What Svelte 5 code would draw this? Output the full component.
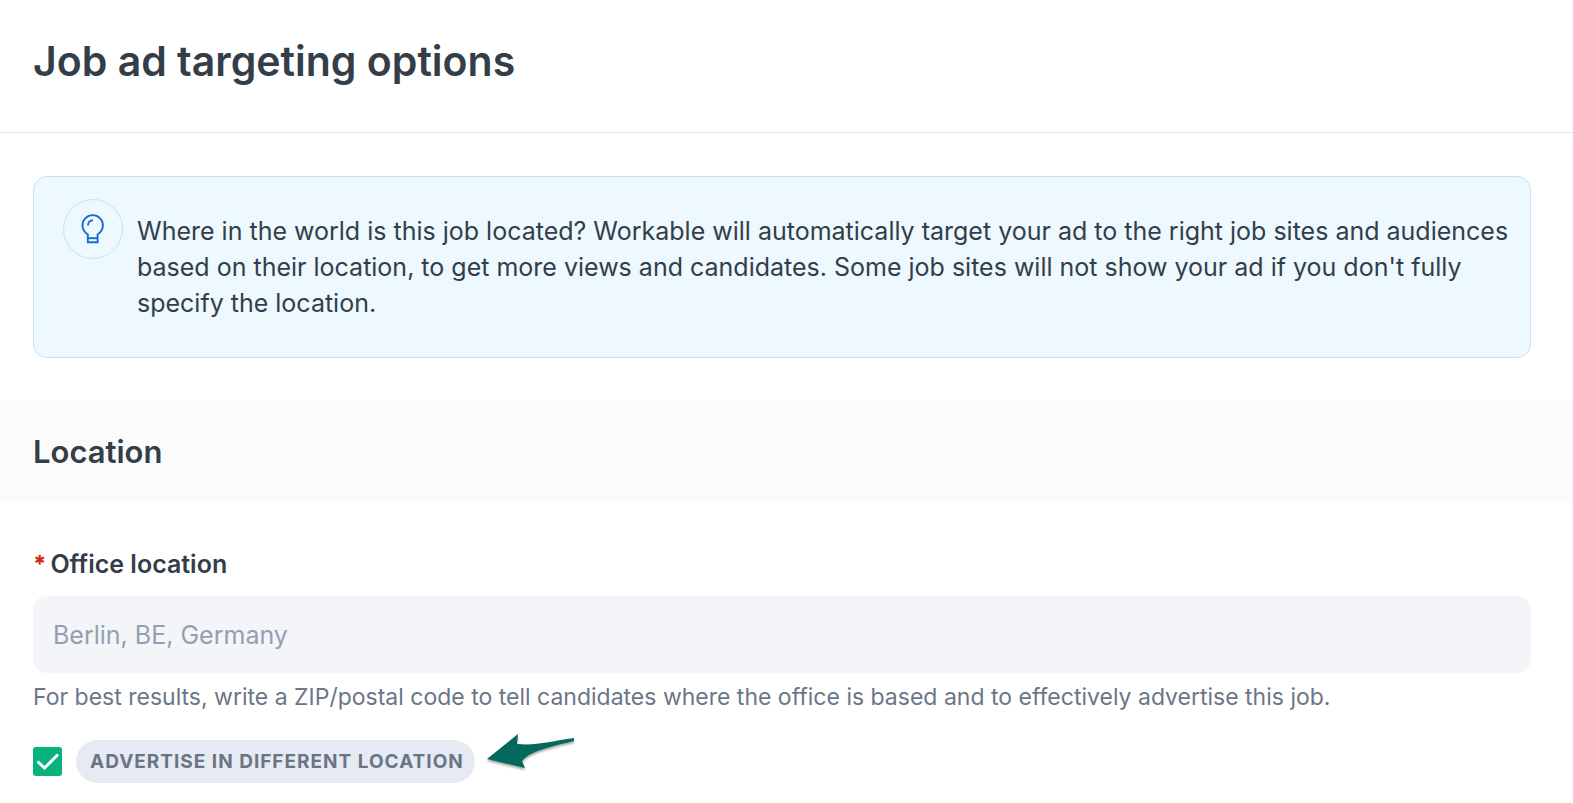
<script>
    let officeLocation = 'Berlin, BE, Germany';
    let differentLocation = true;
</script>

<style>
    :global(body) {
        background: #fff;
    }

    .page {
        font-family: Inter, "Liberation Sans", sans-serif;
        color: #333e49;
    }

    .page-header {
        padding: 31px 33px 41px;
        border-bottom: 1px solid #e2e8f1;
    }

    h1,
    h2 {
        margin: 0;
        font-weight: 600;
    }

    h1 {
        font-size: 41px;
        line-height: 60px;
    }

    .info {
        display: flex;
        gap: 14px;
        margin: 43px 42px 42px 33px;
        padding: 22px 20px 36px 29px;
        background: #edf8ff;
        border: 1px solid #c5e1fd;
        border-radius: 14px;
    }

    .info-icon {
        flex: none;
        display: flex;
        align-items: center;
        justify-content: center;
        width: 60px;
        height: 60px;
        box-sizing: border-box;
        border: 1px solid #c5e1fd;
        border-radius: 50%;
    }

    .info p {
        margin: 0;
        padding-top: 14px;
        font-size: 25px;
        line-height: 36px;
    }

    .section-header {
        padding: 32px 33px 30px;
        background: #fbfbfb;
    }

    h2 {
        font-size: 31px;
        line-height: 40px;
    }

    .form {
        padding: 44px 42px 20px 33px;
    }

    .field-label {
        display: flex;
        gap: 4px;
        font-size: 25px;
        font-weight: 600;
        line-height: 36px;
    }

    .required {
        color: #ce2b10;
        font-size: 23px;
        font-weight: 800;
    }

    .field-input {
        display: block;
        width: 100%;
        height: 77px;
        box-sizing: border-box;
        margin: 14px 0 6px;
        padding: 0 20px;
        border: 0;
        border-radius: 14px;
        background: #f3f5f9;
        color: #949fb1;
        font-family: inherit;
        font-size: 25px;
    }

    .hint {
        margin: 0 0 18px;
        color: #6b7686;
        font-size: 23px;
        line-height: 36px;
    }

    .option {
        display: flex;
        align-items: center;
    }

    .option input {
        flex: none;
        appearance: none;
        width: 29px;
        height: 29px;
        margin: 0 14px 0 0;
        border: 1px solid #949fb1;
        border-radius: 3px;
    }

    .option input:checked {
        border: 0;
        background: #08b27c url("data:image/svg+xml,%3Csvg xmlns='http://www.w3.org/2000/svg' viewBox='0 0 29 29'%3E%3Cpath d='M4.5 14.5 11.5 21 25 7.5' fill='none' stroke='white' stroke-width='3'/%3E%3C/svg%3E") center / contain;
    }

    .pill {
        padding: 0 11px 0 14px;
        border-radius: 22px;
        background: #e6ebf3;
        color: #6b7484;
        font-size: 19px;
        font-weight: 700;
        line-height: 43px;
        letter-spacing: 1px;
        text-transform: uppercase;
    }

    .arrow {
        flex: none;
        margin: 0 0 16px 10px;
        filter: drop-shadow(0 2px 1px rgba(0, 0, 0, .35));
    }
</style>

<main class="page">
    <header class="page-header">
        <h1>Job ad targeting options</h1>
    </header>

    <div class="info">
        <span class="info-icon">
            <svg width="24" height="32" viewBox="0 0 24 32" fill="none" stroke="#1d68d2" stroke-width="1.9" aria-hidden="true">
                <path d="M6.8 29.2V21.5C3.8 19.5 1.5 16.2 1.5 12.3a10.2 10.2 0 0 1 20.4 0c0 3.9-2.3 7.2-5.3 9.2v7.7z" />
                <path d="M6.8 25.2h10" />
                <path d="M7 12.5c0-3 2-5.2 5-5.2" />
            </svg>
        </span>
        <p>
            Where in the world is this job located? Workable will automatically target your ad to the right job sites and audiences based on their location, to get more views and candidates. Some job sites will not show your ad if you don't fully specify the location.
        </p>
    </div>

    <section>
        <header class="section-header">
            <h2>Location</h2>
        </header>

        <div class="form">
            <label class="field-label" for="office-location"><span class="required">*</span> Office location</label>
            <input id="office-location" class="field-input" type="text" disabled value={officeLocation} aria-describedby="office-hint" />
            <p id="office-hint" class="hint">For best results, write a ZIP/postal code to tell candidates where the office is based and to effectively advertise this job.</p>

            <div class="option">
                <input id="different-location" type="checkbox" bind:checked={differentLocation} />
                <label class="pill" for="different-location">Advertise in different location</label>
                <svg class="arrow" width="92" height="40" viewBox="0 0 92 40" aria-hidden="true">
                    <path d="M2 26 33 1 32 11C51 13 66 8 89 5v3C68 13 45 18 37 28L40 35Z" fill="#02695c" />
                </svg>
            </div>
        </div>
    </section>
</main>
